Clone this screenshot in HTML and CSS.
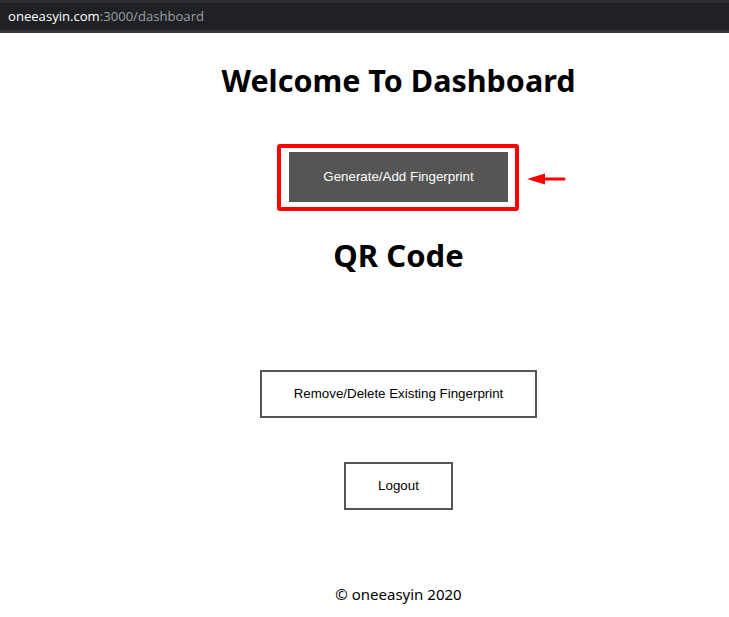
FILE: index.html
```html
<!DOCTYPE html>
<html lang="en">
<head>
<meta charset="utf-8">
<title>Dashboard</title>
<link rel="stylesheet" href="styles.css">
</head>
<body>
<div class="urlbar"><span class="host">oneeasyin.com</span><span class="path">:3000/dashboard</span></div>
<main class="page">
  <h1 class="title">Welcome To Dashboard</h1>
  <div class="highlight">
    <button class="btn btn-dark">Generate/Add Fingerprint</button>
    <span class="annot-box"></span>
    <svg class="annot-arrow" width="40" height="12" viewBox="0 0 40 12" aria-hidden="true">
      <polygon points="0,6 18,0.5 18,11.5" fill="#f00"/>
      <line x1="16" y1="6" x2="37" y2="6" stroke="#f00" stroke-width="3.2" stroke-linecap="round"/>
    </svg>
  </div>
  <h2 class="title qr-title">QR Code</h2>
  <div class="qr"></div>
  <button class="btn">Remove/Delete Existing Fingerprint</button>
  <button class="btn btn-logout">Logout</button>
  <footer class="footer">© oneeasyin 2020</footer>
</main>
</body>
</html>
```
FILE: styles.css
```css
html, body {
  margin: 0;
  padding: 0;
  background: #fff;
  overflow: hidden;
}
body {
  width: 729px;
  height: 617px;
}
.urlbar {
  height: 27px;
  background: #202124;
  border-top: 3px solid #2b2c2f;
  border-bottom: 3px solid #35363a;
  padding-left: 8px;
  display: flex;
  align-items: center;
  font-family: "Open Sans", "Noto Sans", sans-serif;
  font-size: 13.1px;
  line-height: 1;
}
.host { color: #fff; }
.path { color: #9aa0a6; }

.page {
  padding-left: 68px;
  display: flex;
  flex-direction: column;
  align-items: center;
}
.title {
  font-family: "Noto Sans", "Open Sans", sans-serif;
  font-weight: 700;
  font-size: 30.5px;
  line-height: 40px;
  margin: 27px 0 0;
  color: #000;
}
.qr-title {
  font-size: 31px;
  margin-top: 33px;
}
.highlight {
  position: relative;
  margin-top: 52px;
}
.annot-box {
  position: absolute;
  top: -8px;
  left: -12px;
  right: -11px;
  bottom: -9px;
  border: 4px solid #f00;
  border-radius: 3px;
}
.annot-arrow {
  position: absolute;
  left: calc(100% + 19px);
  top: 21px;
}
.btn {
  font-family: "Liberation Sans", Arial, sans-serif;
  font-size: 13.333px;
  line-height: 14px;
  padding: 15px 32px;
  border: 2px solid #555;
  background: #fff;
  color: #000;
  border-radius: 0;
  display: block;
}
.btn-dark {
  background: #555;
  color: #fff;
  padding: 16px 32px;
}
.qr {
  height: 95px;
}
.btn-logout {
  margin-top: 44px;
}
.footer {
  font-family: "Noto Sans", "Open Sans", sans-serif;
  font-size: 15px;
  line-height: 20px;
  margin-top: 74px;
  color: #000;
}
```
